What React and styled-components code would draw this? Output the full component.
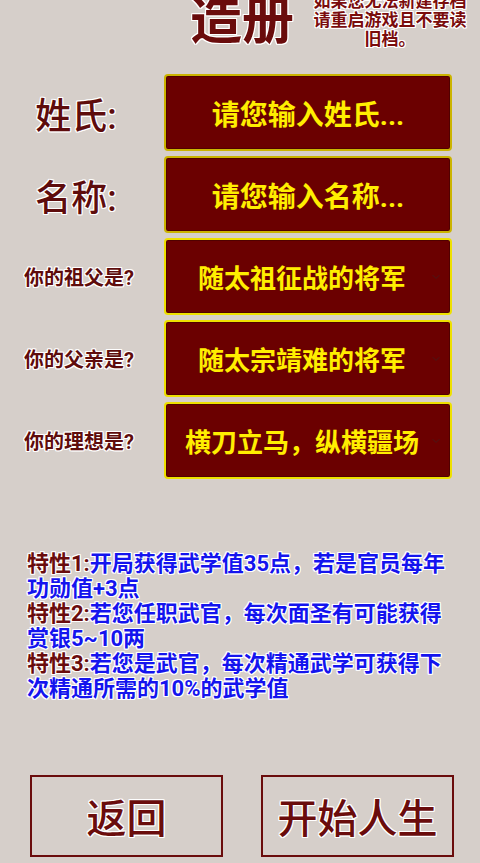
import React from 'react';
import styled, { createGlobalStyle } from 'styled-components';
import { ChevronDown } from 'lucide-react';

const GlobalStyle = createGlobalStyle`
  html, body {
    margin: 0;
    padding: 0;
    background: #d6cfca;
    overflow: hidden;
  }
  body {
    font-family: Roboto, 'Noto Sans CJK SC', sans-serif;
  }
`;

const outline = (c) => `
  text-shadow: -1px -1px 0 ${c}, 1px -1px 0 ${c}, -1px 1px 0 ${c}, 1px 1px 0 ${c},
    0 -1px 0 ${c}, 0 1px 0 ${c}, -1px 0 0 ${c}, 1px 0 0 ${c};
`;

const Page = styled.div`
  width: 480px;
  height: 863px;
  display: flex;
  flex-direction: column;
  overflow: hidden;
`;

const Header = styled.header`
  display: flex;
  align-items: flex-start;
  padding-left: 190px;
  gap: 10px;
  height: 70px;
  margin-top: -8px;
`;

const Title = styled.h1`
  margin: 0;
  font-size: 52px;
  line-height: 60px;
  font-weight: 700;
  color: #6a0c0c;
  ${outline('#fff')};
`;

const Note = styled.p`
  margin: 0;
  width: 172px;
  text-align: center;
  font-size: 17px;
  line-height: 19px;
  font-weight: 700;
  color: #7a0c0c;
  ${outline('#fff')};
`;

const Form = styled.div`
  display: flex;
  flex-direction: column;
  gap: 5px;
  margin-top: 12px;
`;

const Row = styled.div`
  display: grid;
  grid-template-columns: 164px 288px;
  align-items: center;
`;

const Label = styled.div`
  text-align: center;
  padding-right: ${({ $big }) => ($big ? '12px' : '6px')};
  font-size: ${({ $big }) => ($big ? '36px' : '20px')};
  font-weight: ${({ $big }) => ($big ? 500 : 700)};
  color: #5e0c0c;
  ${outline('#fff')};
`;

const Box = styled.div`
  position: relative;
  box-sizing: border-box;
  height: 77px;
  display: flex;
  align-items: center;
  justify-content: center;
  padding-right: ${({ $select }) => ($select ? '12px' : '0')};
  background: #6b0000;
  border: 2px solid ${({ $select }) => ($select ? '#eee000' : '#cbb400')};
  border-radius: 4px;
  box-shadow: inset 0 0 0 1px rgba(0, 0, 0, 0.25);
  color: #ffee00;
  font-size: ${({ $select }) => ($select ? '26px' : '28px')};
  font-weight: 700;
  white-space: nowrap;
`;

const Chevron = styled(ChevronDown)`
  position: absolute;
  right: 8px;
  top: 50%;
  transform: translateY(-50%);
  color: #4a1818;
`;

const Traits = styled.div`
  margin: 72px 0 0 27px;
  width: 428px;
  font-size: 22px;
  line-height: 25px;
  font-weight: 700;
  color: #1414ee;
  ${outline('#fff')};
`;

const TraitName = styled.span`
  color: #6a0c0c;
`;

const Buttons = styled.div`
  margin-top: auto;
  margin-bottom: 6px;
  display: flex;
  gap: 38px;
  padding-left: 30px;
`;

const Button = styled.button`
  box-sizing: border-box;
  width: 193px;
  height: 82px;
  background: transparent;
  border: 2px solid #6a0c0c;
  font-family: Roboto, 'Noto Sans CJK SC', sans-serif;
  font-size: 40px;
  font-weight: 500;
  color: #6a0c0c;
  ${outline('#fff')};
  padding: 0;
`;

const rows = [
  { label: '姓氏:', big: true, value: '请您输入姓氏...' },
  { label: '名称:', big: true, value: '请您输入名称...' },
  { label: '你的祖父是?', value: '随太祖征战的将军', select: true },
  { label: '你的父亲是?', value: '随太宗靖难的将军', select: true },
  { label: '你的理想是?', value: '横刀立马，纵横疆场', select: true },
];

const traits = [
  ['特性1:', '开局获得武学值35点，若是官员每年功勋值+3点'],
  ['特性2:', '若您任职武官，每次面圣有可能获得赏银5~10两'],
  ['特性3:', '若您是武官，每次精通武学可获得下次精通所需的10%的武学值'],
];

export default function App() {
  return (
    <Page>
      <GlobalStyle />
      <Header>
        <Title>造册</Title>
        <Note>
          如果您无法新建存档
          <br />
          请重启游戏且不要读
          <br />
          旧档。
        </Note>
      </Header>
      <Form>
        {rows.map((r) => (
          <Row key={r.label}>
            <Label $big={r.big}>{r.label}</Label>
            <Box $select={r.select}>
              {r.value}
              {r.select && <Chevron size={12} strokeWidth={2} />}
            </Box>
          </Row>
        ))}
      </Form>
      <Traits>
        {traits.map(([name, text]) => (
          <div key={name}>
            <TraitName>{name}</TraitName>
            {text}
          </div>
        ))}
      </Traits>
      <Buttons>
        <Button>返回</Button>
        <Button>开始人生</Button>
      </Buttons>
    </Page>
  );
}
